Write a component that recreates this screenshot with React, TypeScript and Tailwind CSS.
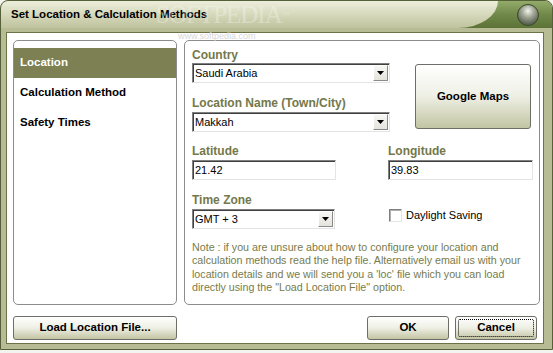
import React from "react";

// Left navigation entries
const navItems = [
    { id: "location", name: "Location", active: true },
    { id: "calc", name: "Calculation Method", active: false },
    { id: "safety", name: "Safety Times", active: false },
];

const noteLines = [
    "Note : if you are unsure about how to configure your location and",
    "calculation methods read the help file. Alternatively email us with your",
    "location details and we will send you a 'loc' file which you can load",
    'directly using the "Load Location File" option.',
];

function Label({ children }: { children: React.ReactNode }) {
    return <div className="h-[14px] text-[12px] font-bold leading-[14px] text-[#74784a]">{children}</div>;
}

function Select({ value, className }: { value: string; className: string }) {
    return (
        <div className={`flex h-[20px] border border-t-[#7f7f7f] border-l-[#7f7f7f] border-r-[#e4e4e4] border-b-[#e4e4e4] bg-white shadow-[inset_1px_1px_0_#404040] ${className}`}>
            <span className="flex-1 pl-[2px] pt-[1px] text-[11px] leading-[17px] text-black">{value}</span>
            <span className="mt-[1px] mb-[1px] mr-[1px] flex w-[15px] items-center justify-center border border-t-[#ffffff] border-l-[#ffffff] border-r-[#8a8a8a] border-b-[#8a8a8a] bg-gradient-to-b from-[#f7f7f5] to-[#e4e3dc]">
                <svg width="7" height="4" viewBox="0 0 7 4">
                    <path d="M0 0h7L3.5 4z" fill="#000" />
                </svg>
            </span>
        </div>
    );
}

function Input({ value, className }: { value: string; className: string }) {
    return (
        <div className={`h-[20px] border border-t-[#7f7f7f] border-l-[#7f7f7f] border-r-[#e4e4e4] border-b-[#e4e4e4] bg-white pl-[2px] pt-[1px] text-[11px] leading-[17px] text-black shadow-[inset_1px_1px_0_#404040] ${className}`}>
            {value}
        </div>
    );
}

function Button({ children, className, focused = false }: { children: React.ReactNode; className: string; focused?: boolean }) {
    return (
        <button className={`relative flex items-center justify-center rounded-[3px] border border-[#6e6e66] bg-gradient-to-b from-[#ffffff] via-[#eeefe4] to-[#c2c5a3] text-[11.5px] font-bold text-black ${className}`}>
            {focused && <span className="absolute inset-[2px] rounded-[2px] border border-dotted border-black" />}
            {children}
        </button>
    );
}

export default function App() {
    return (
        <div className="relative h-[353px] w-[553px] overflow-hidden bg-[#f3f3ef] font-['Liberation_Sans',Arial,sans-serif]">
            <div className="flex h-[350px] flex-col overflow-hidden rounded-t-[8px] border border-[#55603a] bg-[#b7bc95]">
                {/* Title bar */}
                <div className="flex h-[27px] bg-gradient-to-b from-[#93ab69] via-[#70894a] to-[#5c7236]">
                    <div className="flex w-[497px] items-center rounded-br-[40px_27px] rounded-tl-[7px] bg-gradient-to-b from-[#eceedc] via-[#d6d9bb] to-[#bfc39e] pl-[10px] pt-[1px]">
                        <span className="text-[11.5px] font-bold text-black">Set Location &amp; Calculation Methods</span>
                    </div>
                    <div className="flex items-center pl-[19px]">
                        <div className="h-[22px] w-[22px] rounded-full border border-[#3b4528] bg-[radial-gradient(circle_at_50%_30%,#f2f4ec_0%,#a3a999_35%,#5b6353_75%,#7c8572_100%)]" />
                    </div>
                </div>

                {/* Body */}
                <div className="ml-[5px] mr-[8px] mt-[4px] flex h-[312px] flex-col border border-[#6c7349] bg-white pl-[6px] pr-[3px] pt-[7px]">
                    <div className="flex h-[265px] gap-[7px]">
                        {/* Left navigation */}
                        <div className="w-[164px] rounded-[5px] border border-[#8c8c8c] pt-[7px]">
                            {navItems.map((item) => (
                                <div
                                    key={item.id}
                                    className={`flex h-[30px] items-center pl-[6px] text-[11.5px] font-bold ${item.active ? "bg-[#7c8052] text-white" : "text-black"}`}
                                >
                                    {item.name}
                                </div>
                            ))}
                        </div>

                        {/* Location form */}
                        <div className="w-[356px] rounded-[5px] border border-[#8c8c8c] pl-[7px] pt-[7px]">
                            <div className="flex">
                                <div className="w-[198px]">
                                    <Label>Country</Label>
                                    <Select value="Saudi Arabia" className="mt-[1px] w-[198px]" />
                                    <div className="mt-[13px]">
                                        <Label>Location Name (Town/City)</Label>
                                    </div>
                                    <Select value="Makkah" className="mt-[2px] w-[198px]" />
                                </div>
                                <Button className="ml-[25px] mt-[16px] h-[65px] w-[116px]">Google Maps</Button>
                            </div>

                            <div className="mt-[12px] flex">
                                <div className="w-[144px]">
                                    <Label>Latitude</Label>
                                    <Input value="21.42" className="mt-[2px] w-[144px]" />
                                </div>
                                <div className="ml-[52px] w-[145px]">
                                    <Label>Longitude</Label>
                                    <Input value="39.83" className="mt-[2px] w-[145px]" />
                                </div>
                            </div>

                            <div className="mt-[13px] flex items-start">
                                <div className="w-[143px]">
                                    <Label>Time Zone</Label>
                                    <Select value="GMT + 3" className="mt-[2px] w-[143px]" />
                                </div>
                                <div className="ml-[54px] mt-[16px] flex items-center">
                                    <span className="h-[13px] w-[13px] border border-t-[#7f7f7f] border-l-[#7f7f7f] border-r-[#e4e4e4] border-b-[#e4e4e4] bg-white shadow-[inset_1px_1px_0_#b0b0b0]" />
                                    <span className="ml-[4px] text-[11px] leading-[13px] text-black">Daylight Saving</span>
                                </div>
                            </div>

                            <p className="mt-[12px] whitespace-nowrap text-[10.7px] leading-[13.3px] text-[#787b4b]">
                                {noteLines.map((line, i) => (
                                    <React.Fragment key={i}>
                                        {line}
                                        {i < noteLines.length - 1 && <br />}
                                    </React.Fragment>
                                ))}
                            </p>
                        </div>
                    </div>

                    {/* Bottom buttons */}
                    <div className="mt-[11px] flex h-[24px]">
                        <Button className="h-[24px] w-[164px]">Load Location File...</Button>
                        <div className="flex flex-1 justify-end gap-[6px] pr-[3px]">
                            <Button className="h-[24px] w-[82px]">OK</Button>
                            <Button className="h-[24px] w-[82px]" focused>Cancel</Button>
                        </div>
                    </div>
                </div>
            </div>

            {/* Softpedia watermark */}
            <div className="pointer-events-none absolute left-[156px] top-[2px] font-['Liberation_Serif',serif] text-[25px] leading-[25px] tracking-[-1px] text-white/30">
                SOFTPEDIA<span className="align-top text-[8px]">™</span>
            </div>
            <div className="pointer-events-none absolute left-[178px] top-[32px] text-[9px] leading-[9px] text-[#d8d8d8]">www.softpedia.com</div>
        </div>
    );
}
